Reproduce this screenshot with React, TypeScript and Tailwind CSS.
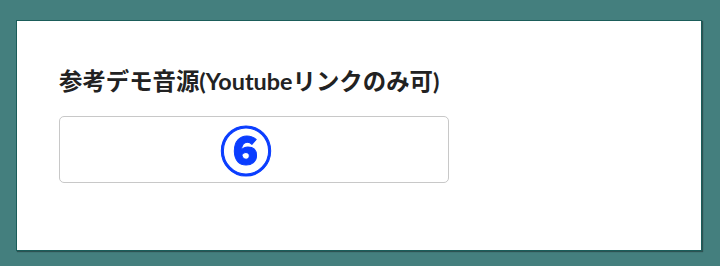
export default function App() {
  return (
    <div className="w-[720px] h-[266px] bg-[#447f7e] pt-[20px] pl-[16px]">
      <div className="w-[686px] h-[231px] bg-white border border-[#1b5d5a] shadow-[1px_1px_1px_rgba(0,0,0,0.35)] pl-[42px] pt-[45px] flex flex-col">
        <div className="text-[23.4px] leading-[30px] font-bold text-[#222] font-['Lato','Noto_Sans_CJK_JP',sans-serif]">
          参考デモ音源(Youtubeリンクのみ可)
        </div>
        <div className="relative mt-[20px] w-[390px] h-[67px] border border-[#c8c8c8] rounded-[5px]">
          <span className="absolute left-[160px] top-[4px] text-[52px] leading-[56px] font-black text-[#0a3dff] [-webkit-text-stroke:1px_#0a3dff] font-['Noto_Sans_CJK_JP',sans-serif]">
            ⑥
          </span>
        </div>
      </div>
    </div>
  );
}
